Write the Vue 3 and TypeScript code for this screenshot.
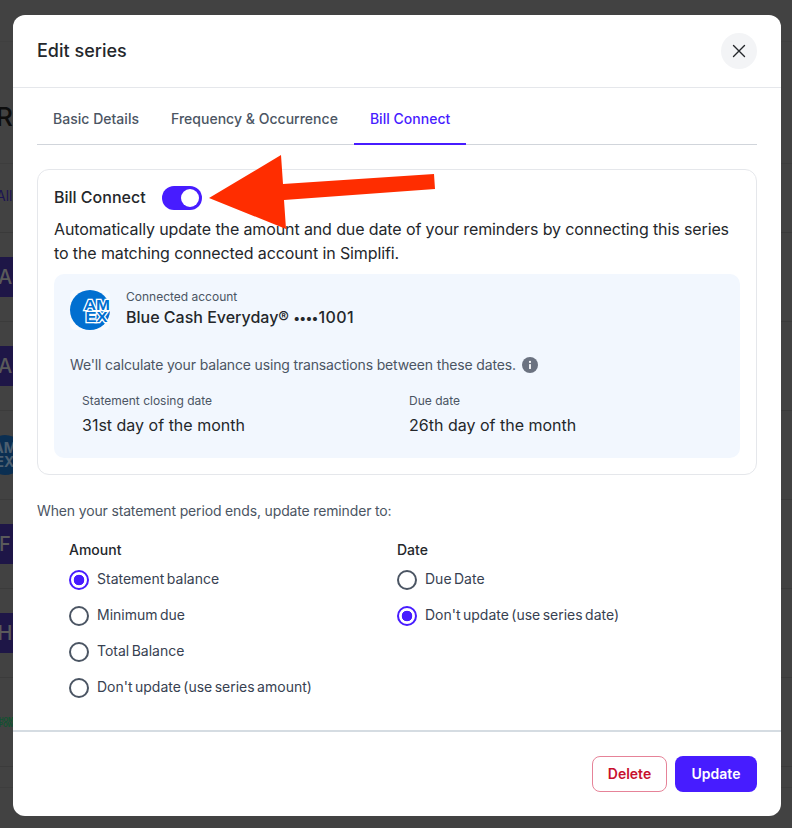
<template>
  <div class="page">
    <div class="backdrop" aria-hidden="true">
      <div class="page-title">R</div>
      <div class="page-filter">All</div>
      <div
        v-for="row in backdropRows"
        :key="row.id"
        class="backdrop-row"
      >
        <span
          v-if="row.letter"
          class="row-logo"
        >{{ row.letter }}</span>
        <span
          v-else-if="row.kind === 'amex'"
          class="row-amex"
        >AM<br>EX</span>
        <span
          v-else-if="row.kind === 'green'"
          class="row-green"
        >HOME<br>POW</span>
      </div>
    </div>

    <div class="modal">
      <header class="modal-header">
        <h2 class="modal-title">Edit series</h2>
        <button type="button" class="close-button" aria-label="Close">
          <svg width="14" height="14" viewBox="0 0 14 14" fill="none">
            <path d="M1.5 1.5l11 11M12.5 1.5l-11 11" stroke="#24272b" stroke-width="1.4" stroke-linecap="round" />
          </svg>
        </button>
      </header>

      <nav class="tabs">
        <span
          v-for="tab in tabs"
          :key="tab"
          class="tab"
          :class="{ 'tab-active': tab === 'Bill Connect' }"
        >{{ tab }}</span>
      </nav>

      <section class="connect-card">
        <div class="connect-title-row">
          <span class="connect-title">Bill Connect</span>
          <span class="toggle"><span class="toggle-knob" /></span>
        </div>
        <p class="connect-desc">
          Automatically update the amount and due date of your reminders by connecting this series to the matching connected account in Simplifi.
        </p>

        <div class="account-panel">
          <div class="account-head">
            <svg class="amex-logo" width="40" height="40" viewBox="0 0 40 40">
              <rect width="40" height="40" rx="6" fill="#f9fbfe" />
              <circle cx="20" cy="20" r="20" fill="#016fd0" />
              <text x="14" y="19.5" class="amex-text" textLength="26" lengthAdjust="spacingAndGlyphs">AM</text>
              <text x="15.5" y="31.5" class="amex-text" textLength="22" lengthAdjust="spacingAndGlyphs">EX</text>
            </svg>
            <div>
              <div class="account-label">Connected account</div>
              <div class="account-name">Blue Cash Everyday® <span class="account-dots">••••</span><span class="account-digits">1001</span></div>
            </div>
          </div>

          <div class="balance-note">
            <span>We'll calculate your balance using transactions between these dates.</span>
            <svg width="16" height="16" viewBox="0 0 16 16">
              <circle cx="8" cy="8" r="8" fill="#6b7280" />
              <rect x="7.1" y="7" width="1.8" height="5" rx="0.6" fill="#fff" />
              <circle cx="8" cy="4.9" r="1.1" fill="#fff" />
            </svg>
          </div>

          <div class="date-grid">
            <div v-for="item in dates" :key="item.label">
              <div class="date-label">{{ item.label }}</div>
              <div class="date-value">{{ item.value }}</div>
            </div>
          </div>
        </div>
      </section>

      <p class="update-note">When your statement period ends, update reminder to:</p>

      <div class="radio-columns">
        <div
          v-for="group in radioGroups"
          :key="group.title"
          class="radio-group"
        >
          <div class="radio-title">{{ group.title }}</div>
          <div
            v-for="option in group.options"
            :key="option"
            class="radio-row"
          >
            <span class="radio" :class="{ 'radio-on': option === group.selected }" />
            <span class="radio-text">{{ option }}</span>
          </div>
        </div>
      </div>

      <footer class="modal-footer">
        <button type="button" class="btn btn-delete">Delete</button>
        <button type="button" class="btn btn-update">Update</button>
      </footer>
    </div>

    <svg class="arrow" width="792" height="828" viewBox="0 0 792 828" aria-hidden="true">
      <path d="M209 198L281 155L283 184L434 174L435 189L284 200L286 229Z" fill="#ff2d00" />
    </svg>
  </div>
</template>

<script setup lang="ts">
interface BackdropRow {
  id: number
  letter?: string
  kind?: 'amex' | 'green'
}

const backdropRows: BackdropRow[] = [
  { id: 1, letter: 'A' },
  { id: 2, letter: 'A' },
  { id: 3, kind: 'amex' },
  { id: 4, letter: 'F' },
  { id: 5, letter: 'H' },
  { id: 6, kind: 'green' },
  { id: 7 },
]

const tabs = ['Basic Details', 'Frequency & Occurrence', 'Bill Connect']

const dates = [
  { label: 'Statement closing date', value: '31st day of the month' },
  { label: 'Due date', value: '26th day of the month' },
]

const radioGroups = [
  {
    title: 'Amount',
    selected: 'Statement balance',
    options: ['Statement balance', 'Minimum due', 'Total Balance', "Don't update (use series amount)"],
  },
  {
    title: 'Date',
    selected: "Don't update (use series date)",
    options: ['Due Date', "Don't update (use series date)"],
  },
]
</script>

<style scoped>
.page {
  position: relative;
  width: 792px;
  height: 828px;
  overflow: hidden;
  background: #424242;
  font-family: Inter, "Noto Sans", sans-serif;
  color: #24272b;
}

.backdrop {
  display: flex;
  flex-direction: column;
  height: 828px;
  background: linear-gradient(#3f3f3f, #3f3f3f) 0 41px / 100% 1px no-repeat,
    linear-gradient(#3d3d3d, #3d3d3d) 0 163px / 100% 1px no-repeat,
    linear-gradient(#3d3d3d, #3d3d3d) 0 787px / 100% 1px no-repeat;
}

.page-title {
  flex: none;
  height: 164px;
  margin-left: -4px;
  padding-top: 103px;
  box-sizing: border-box;
  font-size: 26px;
  line-height: 28px;
  font-weight: 500;
  color: #0d0d0d;
}

.page-filter {
  flex: none;
  height: 69px;
  margin-left: -4px;
  padding-top: 22px;
  box-sizing: border-box;
  border-bottom: 1px solid #3a3a3a;
  font-size: 14px;
  line-height: 20px;
  color: #1c1353;
}

.backdrop-row {
  flex: 0 0 89px;
  box-sizing: border-box;
  border-bottom: 1px solid #3b3b3b;
  display: flex;
  align-items: center;
}

.row-logo {
  width: 40px;
  height: 40px;
  margin-left: -15px;
  display: flex;
  align-items: center;
  justify-content: center;
  background: #1e1647;
  color: #5a5a5a;
  font-size: 20px;
  font-weight: 500;
}

.row-amex {
  width: 40px;
  height: 40px;
  margin-left: -15px;
  border-radius: 50%;
  background: #0b2f52;
  color: #4d5f70;
  font-size: 14px;
  line-height: 14px;
  font-weight: 700;
  text-align: center;
  padding-top: 6px;
  box-sizing: border-box;
}

.row-green {
  margin-left: -1px;
  font-size: 6px;
  line-height: 5px;
  font-weight: 700;
  color: #0f5230;
}

.modal {
  position: absolute;
  left: 13px;
  top: 15px;
  width: 768px;
  height: 801px;
  display: flex;
  flex-direction: column;
  background: #fff;
  border-radius: 12px;
  overflow: hidden;
}

.modal-header {
  flex: 0 0 73px;
  box-sizing: border-box;
  padding: 0 24px;
  display: flex;
  align-items: center;
  justify-content: space-between;
  border-bottom: 1px solid #e5e7eb;
}

.modal-title {
  margin: 0;
  font-size: 18px;
  line-height: 28px;
  font-weight: 500;
}

.close-button {
  width: 36px;
  height: 36px;
  padding: 0;
  border: 0;
  border-radius: 50%;
  background: #f3f4f6;
  display: flex;
  align-items: center;
  justify-content: center;
}

.tabs {
  flex: 0 0 57px;
  box-sizing: border-box;
  margin: 0 24px;
  display: flex;
  border-bottom: 1px solid #d1d5db;
}

.tab {
  padding: 4px 16px 0;
  margin-bottom: -1px;
  display: flex;
  align-items: center;
  font-size: 14px;
  letter-spacing: 0.02px;
  font-weight: 500;
  color: #4b5563;
}

.tab-active {
  color: #471cff;
  box-shadow: inset 0 -2px 0 #471cff;
}

.connect-card {
  margin: 24px 24px 0;
  height: 306px;
  box-sizing: border-box;
  padding: 16px;
  border: 1px solid #e5e7eb;
  border-radius: 12px;
}

.connect-title-row {
  display: flex;
  align-items: center;
  gap: 16px;
  height: 24px;
}

.connect-title {
  font-size: 16px;
  line-height: 22px;
  padding-bottom: 2px;
  font-weight: 500;
}

.toggle {
  width: 40px;
  height: 24px;
  border-radius: 12px;
  background: #471cff;
  display: flex;
  align-items: center;
  justify-content: flex-end;
  padding-right: 3px;
  box-sizing: border-box;
}

.toggle-knob {
  width: 18px;
  height: 18px;
  border-radius: 50%;
  background: #fff;
}

.connect-desc {
  margin: 7px 0 0;
  font-size: 16px;
  line-height: 24px;
  letter-spacing: -0.115px;
}

.account-panel {
  margin-top: 9px;
  height: 184px;
  box-sizing: border-box;
  padding: 16px;
  border-radius: 10px;
  background: #f2f7fe;
}

.account-head {
  display: flex;
  gap: 16px;
  height: 40px;
}

.account-label {
  font-size: 12px;
  line-height: 14px;
  color: #4b5563;
}

.account-name {
  margin-top: 3px;
  font-size: 16px;
  line-height: 20px;
  font-weight: 500;
}

.account-dots {
  font-size: 13px;
  letter-spacing: -0.9px;
  margin-right: 1px;
}

.account-digits {
  letter-spacing: 0.4px;
}

.amex-logo {
  flex: none;
}

.amex-text {
  font-family: "Liberation Sans", sans-serif;
  font-size: 15px;
  font-weight: 700;
  fill: #016fd0;
  stroke: #fff;
  stroke-width: 2.4px;
  paint-order: stroke;
}

.balance-note {
  margin-top: 27px;
  display: flex;
  align-items: center;
  gap: 6px;
  font-size: 14px;
  line-height: 16px;
  letter-spacing: -0.155px;
  color: #4b5563;
}

.date-grid {
  margin-top: 21px;
  padding-left: 12px;
  display: grid;
  grid-template-columns: 327px 1fr;
}

.date-label {
  font-size: 12px;
  line-height: 14px;
  color: #4b5563;
}

.date-value {
  margin-top: 7px;
  font-size: 16px;
  line-height: 20px;
}

.update-note {
  margin: 26px 24px 0;
  font-size: 14px;
  line-height: 20px;
  letter-spacing: -0.15px;
  color: #4b5563;
}

.radio-columns {
  margin: 19px 0 0 56px;
  display: grid;
  grid-template-columns: 328px 1fr;
}

.radio-title {
  font-size: 14px;
  line-height: 20px;
  font-weight: 500;
  margin-bottom: 10px;
}

.radio-row {
  height: 36px;
  display: flex;
  align-items: flex-start;
  gap: 8px;
  font-size: 14px;
  line-height: 18px;
}

.radio {
  flex: none;
  width: 20px;
  height: 20px;
  box-sizing: border-box;
  border: 2px solid #4b5563;
  border-radius: 50%;
}

.radio-on {
  border-color: #471cff;
  background: radial-gradient(circle, #471cff 0 5px, #fff 5.6px);
}

.radio-text {
  color: #374151;
  word-spacing: -1.5px;
}

.modal-footer {
  margin-top: auto;
  height: 86px;
  box-sizing: border-box;
  padding: 24px;
  border-top: 2px solid #d5dce2;
  display: flex;
  justify-content: flex-end;
  gap: 8px;
}

.btn {
  height: 36px;
  padding: 0 0 2px;
  border-radius: 8px;
  font-family: inherit;
  font-size: 14px;
  font-weight: 600;
}

.btn-delete {
  width: 75px;
  border: 1px solid #e68398;
  background: #fff;
  color: #c8102e;
}

.btn-update {
  width: 82px;
  border: 0;
  background: #471cff;
  color: #fff;
}

.arrow {
  position: absolute;
  left: 0;
  top: 0;
  pointer-events: none;
}
</style>
